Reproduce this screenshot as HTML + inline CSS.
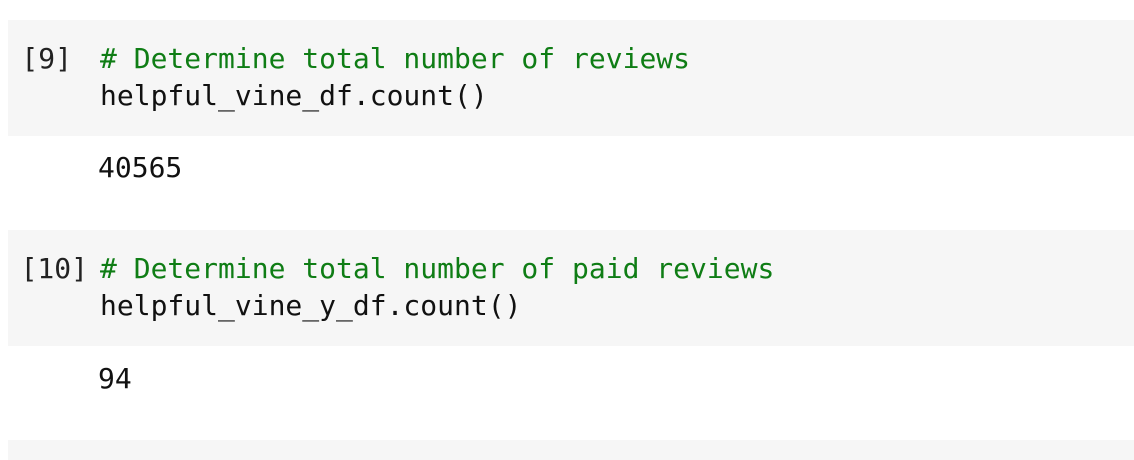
<!DOCTYPE html>
<html><head><style>
body{margin:0;width:1134px;height:454px;background:#fff;position:relative;overflow:hidden;font-family:"DejaVu Sans Mono","Liberation Mono",monospace;font-size:28px;color:#111}
.blk{position:absolute;left:8px;right:0;background:#f6f6f6}
.t{position:absolute;line-height:37px;white-space:pre}
.g{color:#0f7d15}
.p{position:absolute;line-height:37px;width:72px;text-align:right;color:#222}
</style></head><body>
<div class="blk" style="top:20px;height:116px"></div>
<div class="blk" style="top:230px;height:116px"></div>
<div class="blk" style="top:440px;height:20px"></div>
<div class="p" style="top:40px;left:0">[9]</div>
<div class="t" style="top:40px;left:100px"><span class="g"># Determine total number of reviews</span>
helpful_vine_df.count()</div>
<div class="t" style="top:149px;left:98px">40565</div>
<div class="p" style="top:250px;left:16px">[10]</div>
<div class="t" style="top:250px;left:100px"><span class="g"># Determine total number of paid reviews</span>
helpful_vine_y_df.count()</div>
<div class="t" style="top:360px;left:98px">94</div>
</body></html>
